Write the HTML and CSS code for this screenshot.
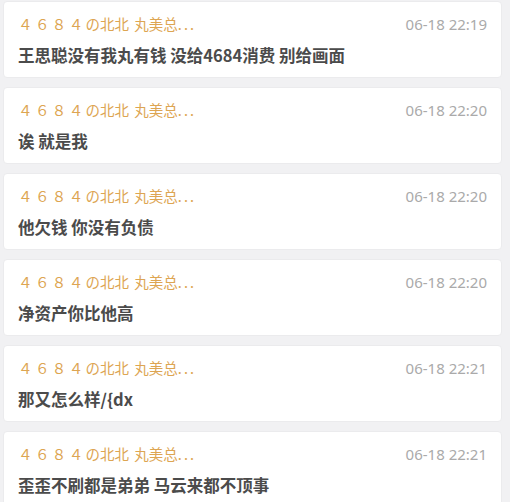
FILE: index.html
```html
<!DOCTYPE html>
<html lang="zh-CN">
<head>
  <meta charset="UTF-8">
  <title>弹幕记录</title>
  <link rel="stylesheet" href="styles.css">
</head>
<body>
  <div class="list">
    <div class="item">
      <div class="head">
        <span class="name"><span class="num">４６８４</span>の北北 丸美总<span class="dots">...</span></span>
        <span class="time">06-18 22:19</span>
      </div>
      <div class="msg">王思聪没有我丸有钱 没给4684消费 别给画面</div>
    </div>
    <div class="item">
      <div class="head">
        <span class="name"><span class="num">４６８４</span>の北北 丸美总<span class="dots">...</span></span>
        <span class="time">06-18 22:20</span>
      </div>
      <div class="msg">诶 就是我</div>
    </div>
    <div class="item">
      <div class="head">
        <span class="name"><span class="num">４６８４</span>の北北 丸美总<span class="dots">...</span></span>
        <span class="time">06-18 22:20</span>
      </div>
      <div class="msg">他欠钱 你没有负债</div>
    </div>
    <div class="item">
      <div class="head">
        <span class="name"><span class="num">４６８４</span>の北北 丸美总<span class="dots">...</span></span>
        <span class="time">06-18 22:20</span>
      </div>
      <div class="msg">净资产你比他高</div>
    </div>
    <div class="item">
      <div class="head">
        <span class="name"><span class="num">４６８４</span>の北北 丸美总<span class="dots">...</span></span>
        <span class="time">06-18 22:21</span>
      </div>
      <div class="msg">那又怎么样/{dx</div>
    </div>
    <div class="item">
      <div class="head">
        <span class="name"><span class="num">４６８４</span>の北北 丸美总<span class="dots">...</span></span>
        <span class="time">06-18 22:21</span>
      </div>
      <div class="msg">歪歪不刷都是弟弟 马云来都不顶事</div>
    </div>
  </div>
</body>
</html>
```

FILE: styles.css
```css
html, body {
  margin: 0;
  background-color: #f1f1f3;
  overflow: hidden;
}
body {
  font-family: "Noto Sans CJK SC", "Noto Sans", sans-serif;
}
.list {
  display: flex;
  flex-direction: column;
  gap: 9px;
  padding: 1px 8px 0 3px;
}
.item {
  height: 77px;
  box-sizing: border-box;
  padding: 12px 14px 12px 14px;
  background-color: #fff;
  border: 1px solid #ebebed;
  border-radius: 4px;
}
.head {
  display: flex;
  justify-content: space-between;
  align-items: center;
  height: 20px;
}
.name {
  font-size: 14.5px;
  line-height: 20px;
  color: #dda552;
  word-spacing: 2px;
}
.num {
  letter-spacing: 2.4px;
}
.dots {
  letter-spacing: 2px;
}
.time {
  font-family: "Noto Sans", sans-serif;
  font-size: 15px;
  color: #aaaaaa;
}
.msg {
  margin-top: 10px;
  font-size: 16.5px;
  line-height: 22px;
  font-weight: bold;
  color: #4b4b4b;
}
```
